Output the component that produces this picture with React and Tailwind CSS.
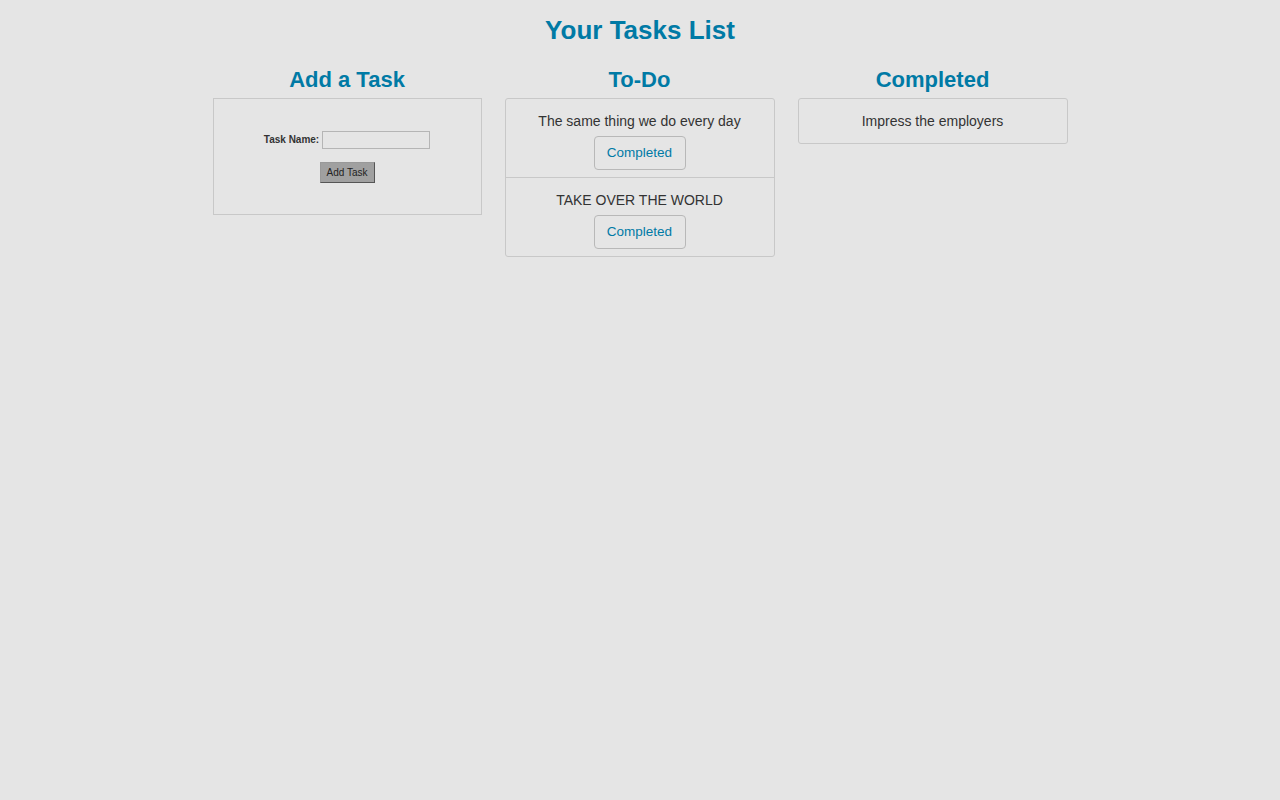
const todos = ['The same thing we do every day', 'TAKE OVER THE WORLD'];
const done = ['Impress the employers'];

function Heading({ children }) {
  return (
    <h2 className="text-center text-[22px] font-bold leading-[26px] text-[#007aa5] mb-[5px]">{children}</h2>
  );
}

export default function App() {
  return (
    <div className="min-h-screen bg-[#e5e5e5] font-['Liberation_Sans',Arial,sans-serif] text-[#333]">
      <h1 className="pt-[13px] text-center text-[26px] font-bold leading-[34px] text-[#007aa5]">Your Tasks List</h1>
      <div className="mt-[20px] flex justify-center gap-[23px]">
        <div className="w-[269px]">
          <Heading>Add a Task</Heading>
          <div className="h-[117px] border border-[#c8c8c8] pt-[32px]">
            <div className="flex items-center justify-center gap-[3px]">
              <label className="text-[10px] font-bold leading-[12px]">Task Name:</label>
              <input className="h-[18px] w-[108px] border border-[#b5b5b5] bg-[#e5e5e5] outline-none" />
            </div>
            <div className="mt-[13px] flex justify-center">
              <button className="h-[21px] w-[55px] border border-[#999] border-r-[#555] border-b-[#555] bg-[#a0a0a0] text-[10px] text-[#222]">
                Add Task
              </button>
            </div>
          </div>
        </div>
        <div className="w-[270px]">
          <Heading>To-Do</Heading>
          <div className="rounded-[3px] border border-[#c8c8c8]">
            {todos.map((t, i) => (
              <div key={i} className={`flex flex-col items-center pt-[12px] pb-[7px] ${i > 0 ? 'border-t border-[#c8c8c8]' : ''}`}>
                <div className="text-[14px] leading-[20px]">{t}</div>
                <button className="mt-[5px] h-[34px] w-[92px] rounded-[4px] border border-[#b8b8b8] text-[13.5px] text-[#007aa5]">
                  Completed
                </button>
              </div>
            ))}
          </div>
        </div>
        <div className="w-[270px]">
          <Heading>Completed</Heading>
          <div className="rounded-[3px] border border-[#c8c8c8]">
            {done.map((t, i) => (
              <div key={i} className="py-[12px] text-center text-[14px] leading-[20px]">{t}</div>
            ))}
          </div>
        </div>
      </div>
    </div>
  );
}
